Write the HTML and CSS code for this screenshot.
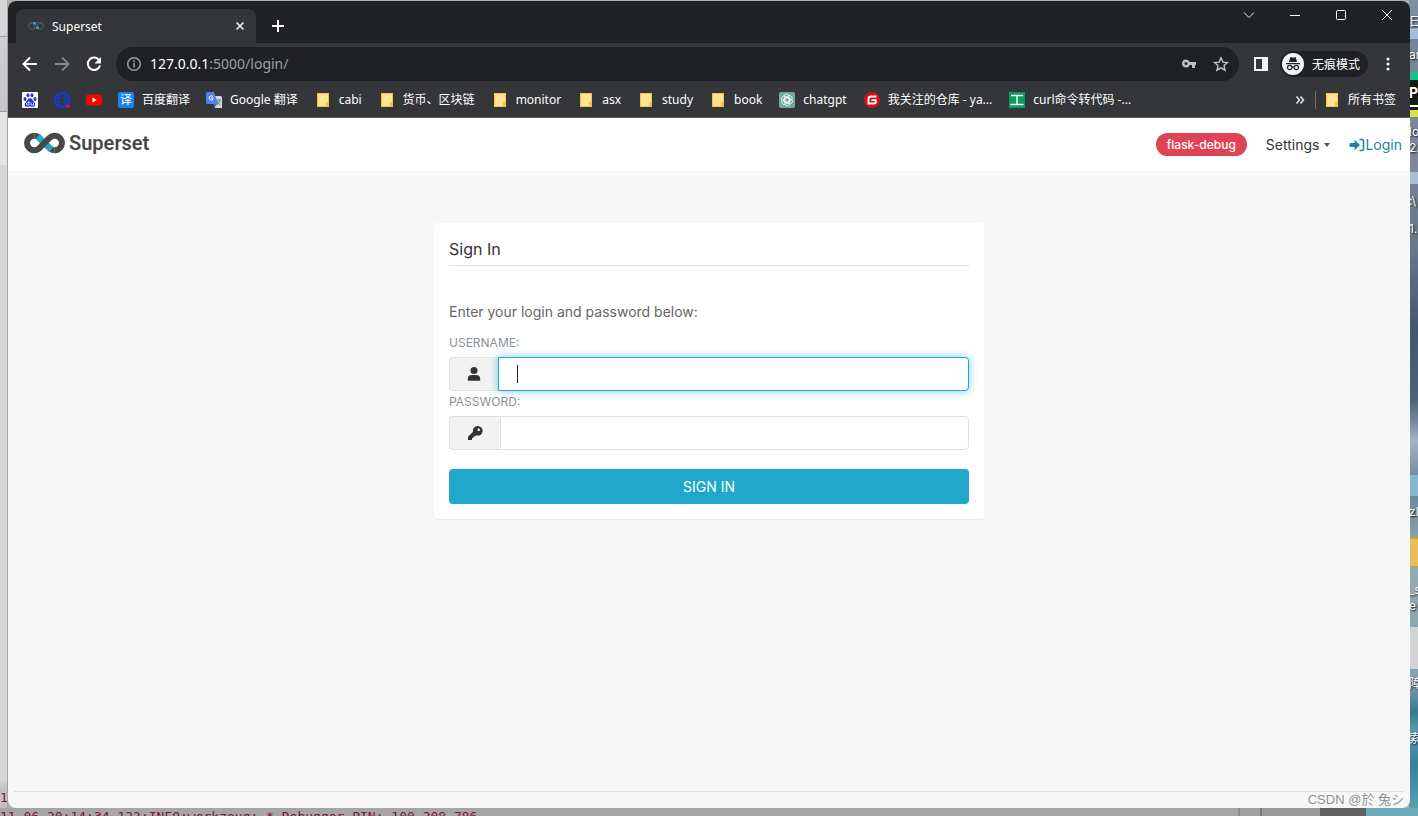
FILE: index.html
```html
<!DOCTYPE html>
<html lang="zh-CN">
<head>
<meta charset="utf-8">
<title>Superset</title>
<link rel="stylesheet" href="styles.css">
</head>
<body>
<div class="backdrop" aria-hidden="true">
  <div class="edge-left"></div>
  <div class="edge-right">
    <span class="snip s1">日</span><span class="snip s2">an</span>
    <span class="art"></span><span class="snip pc">PC</span>
    <span class="snip s3">lo</span><span class="snip s4">2.</span><span class="snip s5">:\</span><span class="snip s6">1.</span>
    <span class="snip s7">zl</span><span class="folder-art"></span><span class="snip s8">_s</span><span class="snip s9">e</span>
    <span class="drive-art"></span><span class="snip s10">障</span><span class="snip s11">索</span>
  </div>
  <div class="edge-bottom"></div>
  <span class="console-top">1.</span>
  <code class="console">11-06 20:14:34,122:INFO:werkzeug: * Debugger PIN: 100-208-786</code>
</div>

<div class="window">
  <header class="tabstrip">
    <div class="tab">
      <svg class="fav" viewBox="0 0 16 16"><g fill="none" stroke-width="1.500"><rect x="1" y="5" width="6" height="6" rx="3" stroke="#505356"/><rect x="9" y="5" width="6" height="6" rx="3" stroke="#505356"/></g><path d="M5 4h3v2.500H5zM8 8.500h3V11H8z" fill="#20a7c9"/></svg>
      <span class="tab-title">Superset</span>
      <button class="plain" aria-label="Close tab"><svg width="16" height="16" viewBox="0 0 16 16"><path d="M4.500 4.500l7 7m0-7l-7 7" stroke="#e8eaed" stroke-width="1.700"/></svg></button>
    </div>
    <button class="plain newtab" aria-label="New tab"><svg width="16" height="16" viewBox="0 0 16 16"><path d="M8 2v12M2 8h12" stroke="#fff" stroke-width="2"/></svg></button>
    <div class="controls">
      <button class="plain" aria-label="Search tabs"><svg width="14" height="14" viewBox="0 0 14 14"><path d="M2 4.500l5 5 5-5" fill="none" stroke="#e8eaed"/></svg></button>
      <button class="plain" aria-label="Minimize"><svg width="14" height="14" viewBox="0 0 14 14"><path d="M2 7.500h10" stroke="#fff"/></svg></button>
      <button class="plain" aria-label="Maximize"><svg width="14" height="14" viewBox="0 0 14 14"><rect x="2.500" y="2.500" width="9" height="9" rx="1" fill="none" stroke="#fff"/></svg></button>
      <button class="plain" aria-label="Close"><svg width="14" height="14" viewBox="0 0 14 14"><path d="M2 2l10 10m0-10L2 12" stroke="#fff"/></svg></button>
    </div>
  </header>

  <div class="toolbar">
    <div class="nav-buttons">
      <button class="plain" aria-label="Back"><svg width="16" height="16" viewBox="0 0 16 16"><path d="M15 8H2M8 1.500L1.500 8 8 14.500" fill="none" stroke="#fff" stroke-width="2"/></svg></button>
      <button class="plain" aria-label="Forward"><svg width="16" height="16" viewBox="0 0 16 16"><path d="M1 8h13M8 1.500L14.500 8 8 14.500" fill="none" stroke="#83868a" stroke-width="2"/></svg></button>
      <button class="plain" aria-label="Reload"><svg width="16" height="16" viewBox="0 0 16 16"><path d="M13.300 4.500A6.200 6.200 0 1 0 14 9.500" fill="none" stroke="#fff" stroke-width="2"/><path d="M15 1v6.500H8.500z" fill="#fff"/></svg></button>
    </div>
    <div class="omnibox">
      <svg width="16" height="16" viewBox="0 0 16 16"><circle cx="8" cy="8" r="6.300" fill="none" stroke="#9aa0a6" stroke-width="1.500"/><path d="M8 7v4.500M8 4.300V6" stroke="#9aa0a6" stroke-width="1.600"/></svg>
      <span class="url"><b>127.0.0.1</b>:5000/login/</span>
      <svg width="16" height="16" viewBox="0 0 16 16"><path d="M5 3.500a4 4 0 1 0 3.700 5.500H11v3h3V9h1V6H8.700A4 4 0 0 0 5 3.500zM5 6a1.500 1.500 0 1 1 0 3 1.500 1.500 0 0 1 0-3z" fill="#bdc1c6" fill-rule="evenodd"/></svg>
      <svg width="16" height="16" viewBox="0 0 16 16"><path d="M8 1.800l1.900 4.300 4.600.4-3.500 3.100 1 4.600L8 11.800l-4 2.400 1-4.600L1.500 6.500l4.600-.4z" fill="none" stroke="#c4c7c5" stroke-width="1.400"/></svg>
    </div>
    <button class="plain side" aria-label="Side panel"><svg width="14" height="14" viewBox="0 0 14 14"><path d="M0 0h14v14H0zM2 2v10h6V2z" fill="#f1f3f4" fill-rule="evenodd"/></svg></button>
    <button class="incognito"><svg width="22" height="22" viewBox="0 0 22 22"><circle cx="11" cy="11" r="11" fill="#f1f3f4"/><path d="M7 9l1.200-4.700h1.500l1.300.5 1.300-.5h1.500L15 9zM4 10h14v1.200H4z" fill="#202124"/><g fill="none" stroke="#202124" stroke-width="1.200"><circle cx="7.700" cy="14.500" r="2.200"/><circle cx="14.300" cy="14.500" r="2.200"/><path d="M10 14.200q1-.8 2 0"/></g></svg>无痕模式</button>
    <button class="plain more" aria-label="Menu"><svg width="16" height="16" viewBox="0 0 16 16"><g fill="#f1f3f4"><circle cx="8" cy="3" r="1.600"/><circle cx="8" cy="8" r="1.600"/><circle cx="8" cy="13" r="1.600"/></g></svg></button>
  </div>

  <nav class="bookmarks" aria-label="书签">
    <a href="#" aria-label="Baidu"><svg width="16" height="16" viewBox="0 0 16 16"><rect width="16" height="16" rx="1" fill="#fff"/><g fill="#2932e1"><ellipse cx="3" cy="7" rx="1.500" ry="2"/><ellipse cx="6" cy="3.300" rx="1.500" ry="2"/><ellipse cx="10" cy="3.300" rx="1.500" ry="2"/><ellipse cx="13" cy="7" rx="1.500" ry="2"/><path d="M8 6.200c2 0 2.500 2 4 3.500s2 5-.8 5c-1.500 0-2-.3-3.200-.3s-1.700.3-3.200.3c-2.800 0-2.300-3.500-.8-5S6 6.200 8 6.200z"/></g><path d="M7 9v4H5.500q-1 0-1-1.200t1-1.200H7M9 10.500v2.500h2.500v-2.500" fill="none" stroke="#fff" stroke-width=".8"/></svg></a>
    <a href="#" aria-label="Chat"><svg width="16" height="16" viewBox="0 0 16 16"><circle cx="8" cy="8" r="7" fill="none" stroke="#1539ee" stroke-width="2"/><path d="M7 5.800H6a2.200 2.200 0 0 0 0 4.400h1M9 5.800h1a2.200 2.200 0 0 1 0 4.400H9" fill="none" stroke="#1539ee" stroke-width="1.500"/><circle cx="14.200" cy="14.200" r="1.800" fill="#e8112d"/></svg></a>
    <a href="#" aria-label="YouTube"><svg width="16" height="16" viewBox="0 0 16 16"><rect y="2.500" width="16" height="11" rx="3" fill="#f00"/><path d="M6.500 5.600L10.700 8l-4.200 2.400z" fill="#fff"/></svg></a>
    <a href="#"><span class="tile blue">译</span>百度翻译</a>
    <a class="mark" href="#"><svg width="16" height="16" viewBox="0 0 16 16"><path d="M6 4h9l1 1v11H9z" fill="#d5d8dc"/><path d="M1 0h7l4 12H1l-1-1V1z" fill="#4a83e8"/><path d="M8 12h3l-2 3z" fill="#3464bf"/><path d="M7 4.500A2.200 2.200 0 1 0 7 7.500V6H5" fill="none" stroke="#fff"/><path d="M10 8h5M12.500 7v1m1.500 0q-1 4-3 5m0-4q1 3 3.500 4" fill="none" stroke="#697782" stroke-width=".9"/></svg>Google 翻译</a>
    <a class="mark" href="#"><i class="folder"></i>cabi</a>
    <a class="mark" href="#"><i class="folder"></i>货币、区块链</a>
    <a class="mark" href="#"><i class="folder"></i>monitor</a>
    <a class="mark" href="#"><i class="folder"></i>asx</a>
    <a class="mark" href="#"><i class="folder"></i>study</a>
    <a class="mark" href="#"><i class="folder"></i>book</a>
    <a class="mark" href="#"><svg width="16" height="16" viewBox="0 0 16 16"><rect width="16" height="16" rx="2" fill="#74aa9c"/><g fill="none" stroke="#fff" stroke-width=".7"><rect x="5.200" y="2.200" width="5" height="8.500" rx="2.500"/><rect x="5.200" y="2.200" width="5" height="8.500" rx="2.500" transform="rotate(60 8 8)"/><rect x="5.200" y="2.200" width="5" height="8.500" rx="2.500" transform="rotate(120 8 8)"/><rect x="5.200" y="2.200" width="5" height="8.500" rx="2.500" transform="rotate(180 8 8)"/><rect x="5.200" y="2.200" width="5" height="8.500" rx="2.500" transform="rotate(240 8 8)"/><rect x="5.200" y="2.200" width="5" height="8.500" rx="2.500" transform="rotate(300 8 8)"/></g></svg>chatgpt</a>
    <a class="mark" href="#"><svg width="16" height="16" viewBox="0 0 16 16"><circle cx="8" cy="8" r="8" fill="#d80d1c"/><path d="M12.500 4.500H7Q4.500 4.500 4.500 7v4.500H10q1.800 0 1.800-1.800V8.200H7.500" fill="none" stroke="#fff" stroke-width="1.800"/></svg>我关注的仓库 - ya...</a>
    <a class="mark" href="#"><svg width="16" height="16" viewBox="0 0 16 16"><path d="M0 0h16v16H0z" fill="#0b9a64"/><path d="M2 3.500h12M8 3.500v9M1.500 12.500h13" stroke="#fff" stroke-width="1.400"/></svg>curl命令转代码 -...</a>
    <button class="plain overflow" aria-label="More bookmarks"><svg width="10" height="10" viewBox="0 0 10 10"><path d="M1.500 1.500L4.500 5l-3 3.500M5.500 1.500L8.500 5l-3 3.500" fill="none" stroke="#e8eaed" stroke-width="1.500"/></svg></button>
    <a class="all" href="#"><i class="folder"></i>所有书签</a>
  </nav>

  <div class="page">
    <nav class="navbar">
      <a class="brand" href="#"><svg width="41" height="22" viewBox="0 0 42 22"><g fill="none" stroke-width="6.200"><path d="M10.500 3.600Q13 3.600 15 5M27 17Q29 18.400 31.500 18.400" stroke="#484848"/><path d="M14 4.200L28 17.800" stroke="#20a7c9" stroke-width="6.500"/><path d="M10.500 3.600a7.400 7.400 0 1 0 0 14.800Q14 18.400 17 15L25 6.800Q28 3.600 31.500 3.600a7.400 7.400 0 1 1 0 14.800" stroke="#484848"/></g></svg><span>Superset</span></a>
      <div class="menu">
        <span class="pill">flask-debug</span>
        <button class="plain settings">Settings<i class="caret"></i></button>
        <a class="login" href="#"><svg width="16" height="14" viewBox="0 0 16 14"><path d="M1.500 5h4V1.800L11 7l-5.500 5.200V9h-4q-1 0-1-1V6q0-1 1-1z" fill="#1985a0"/><path d="M10.500 1.500H13q1.500 0 1.500 1.500v8q0 1.500-1.500 1.500h-2.500" fill="none" stroke="#1985a0" stroke-width="1.600"/></svg>Login</a>
      </div>
    </nav>
    <main>
      <form class="card">
        <h1>Sign In</h1>
        <p>Enter your login and password below:</p>
        <label for="username">Username:</label>
        <div class="field focused">
          <span class="addon"><svg width="14" height="14" viewBox="0 0 14 14"><circle cx="7" cy="3.600" r="3.500" fill="#333"/><path d="M.8 13.800V12q0-4 4-4h4.400q4 0 4 4v1.800z" fill="#333"/></svg></span>
          <input id="username" type="text">
        </div>
        <label for="password">Password:</label>
        <div class="field">
          <span class="addon"><svg width="16" height="16" viewBox="0 0 16 16"><path d="M10.500 1a4.800 4.800 0 1 1-1.300 9.300L8 11.500H6.500V13H5v1.500q0 .5-.5.500h-3q-.5 0-.5-.5v-2.700l5-5A4.800 4.800 0 0 1 10.500 1zm1.300 2.400a1.300 1.300 0 1 0 0 2.600 1.300 1.300 0 0 0 0-2.600z" fill="#333" fill-rule="evenodd"/></svg></span>
          <input id="password" type="password">
        </div>
        <button class="submit" type="submit">Sign In</button>
      </form>
    </main>
    <footer></footer>
  </div>
</div>
<div class="watermark">CSDN @於 兔シ</div>
</body>
</html>
```
FILE: styles.css
```css
* { box-sizing: border-box; }
html, body { height: 100%; }
body {
  margin: 0;
  padding: 1px 8px 8px;
  overflow: hidden;
  position: relative;
  background: #aab1ae;
  font-family: Inter, "Noto Sans CJK SC", sans-serif;
}
a { text-decoration: none; color: inherit; }
svg { display: block; flex: none; }
.plain {
  border: 0; padding: 0; background: none; color: inherit; font: inherit;
  display: flex; align-items: center; justify-content: center;
}

/* Desktop behind the window */
.backdrop { position: absolute; inset: 0; overflow: hidden; }
.edge-left {
  position: absolute; left: 0; top: 0; bottom: 0; width: 8px;
  border-right: 1px solid #a4a4a4;
  background: linear-gradient(#d6d6d6 36px, #999 36px, #999 37px, #cfcfcf 37px, #c6c6c6 111px, #999 111px, #999 112px, #e5e5e5 112px, #e5e5e5 165px, #d6d6d6 165px, #d6d6d6 780px, #c0c0c0 790px);
}
.edge-right {
  position: absolute; right: 0; top: 0; bottom: 0; width: 9px; overflow: hidden;
  background: linear-gradient(#7d8fa2 28px, #a3c0d8 28px, #a3c0d8 39px, #74859a 39px, #7c899a 172px, #a9bfd4 172px, #a9bfd4 184px, #718196 184px, #65788a 250px, #43586a 330px, #4e6577 400px, #708699 420px, #a5b3bd 440px, #748fa6 475px, #86b6d2 475px, #86b6d2 496px, #70899a 496px, #98a9b0 560px, #82a2b2 680px, #3c7a91 712px, #5798aa 730px, #39809b 765px, #62a5b8 816px);
}
.snip {
  position: absolute; left: 0; white-space: nowrap; color: #fff;
  font-size: 12px; line-height: 16px; text-shadow: 1px 1px 2px #000;
}
.s1 { top: 14px; } .s2 { top: 47px; } .s3 { top: 124px; } .s4 { top: 140px; }
.s5 { top: 193px; } .s6 { top: 221px; } .s7 { top: 504px; } .s8 { top: 582px; }
.s9 { top: 598px; } .s10 { top: 676px; } .s11 { top: 731px; }
.art { position: absolute; left: 0; top: 72px; width: 9px; height: 45px; background: linear-gradient(#18c282 8px, #171c12 8px, #171c12 38px, #d9e444 38px); }
.pc { top: 81px; font-weight: 700; font-size: 14px; border-bottom: 2px solid #fff; line-height: 24px; }
.folder-art { position: absolute; left: 0; top: 537px; width: 9px; height: 30px; background: #e6be5b; border: solid #d79b2a; border-width: 2px 0 1px; }
.drive-art { position: absolute; left: 0; top: 627px; width: 9px; height: 42px; background: #d2d3d4; }
.edge-bottom {
  position: absolute; left: 0; right: 0; bottom: 0; height: 8px;
  background: linear-gradient(90deg, #a6a6a6 1238px, #8d8d8d 1238px, #8d8d8d 1240px, #a1a1a1 1240px, #a1a1a1 1260px, #777 1260px, #777 1262px, #999 1262px, #999 1320px, #636363 1320px, #636363 1366px, #6eacbb 1366px);
}
.console, .console-top { position: absolute; left: 0; color: #751b2b; font: 13px/16px "DejaVu Sans Mono", monospace; white-space: nowrap; }
.console { top: 809px; }
.console-top { top: 790px; }

/* Browser window */
.window {
  position: relative; height: 100%; display: flex; flex-direction: column;
  border-radius: 8px; overflow: hidden; background: #f7f7f7;
  color: #fff;
}
.tabstrip, .toolbar, .bookmarks { font-family: "Noto Sans", "Noto Sans CJK SC", sans-serif; font-size: 12px; flex: none; }
.tabstrip { height: 42px; background: #202124; display: flex; align-items: flex-end; padding-left: 8px; }
.tab {
  width: 240px; height: 34px; padding: 0 8px 0 12px; display: flex; align-items: center; gap: 8px;
  background: #35363a; border-radius: 8px 8px 0 0;
}
.fav { width: 16px; height: 16px; }
.tab-title { flex: 1; }
.newtab { width: 28px; height: 34px; margin-left: 8px; }
.controls { margin-left: auto; align-self: flex-start; display: flex; }
.controls .plain { width: 46px; height: 28px; }

.toolbar { height: 42px; background: #35363a; display: flex; align-items: center; }
.nav-buttons { display: flex; gap: 16px; padding: 0 14px; }
.omnibox {
  flex: 1; height: 34px; border-radius: 17px; background: #202124;
  display: flex; align-items: center; padding: 0 10px; gap: 16px;
}
.url { flex: 1; margin-left: -8px; padding-bottom: 1px; font-size: 14px; color: #9aa0a6; }
.url b { font-weight: 400; color: #fff; }
.side { margin: 0 12px 0 15px; }
.incognito {
  height: 26px; border: 0; border-radius: 13px; background: #202124; color: #fff;
  display: flex; align-items: center; gap: 8px; padding: 0 8px 0 2px; font: inherit;
}
.more { margin: 0 14px 0 12px; }

.bookmarks {
  height: 33px; background: #35363a; border-bottom: 1px solid #5c5d61;
  display: flex; align-items: center; gap: 16px; padding: 0 14px 2px; white-space: nowrap;
}
.bookmarks a { display: flex; align-items: center; gap: 8px; line-height: 18px; }
.bookmarks .mark { padding-right: 1px; }
.folder { position: relative; width: 12px; height: 14px; margin: 0 2px; background: #ffe391; border: 1px solid #edc64a; }
.folder::after { content: ""; position: absolute; right: -1px; bottom: -1px; width: 3px; height: 5px; background: #edc64a; }
.tile { width: 16px; height: 16px; border-radius: 2px; line-height: 16px; text-align: center; font-size: 12px; }
.blue { background: #1783f5; }
.overflow { margin-left: auto; margin-right: -6px; }
.bookmarks .all { border-left: 1px solid #6b6c70; padding-left: 8px; }

/* Superset page */
.page { flex: 1; min-height: 0; display: flex; flex-direction: column; color: #333; }
.navbar { height: 53px; flex: none; background: #fff; display: flex; justify-content: space-between; padding: 0 8px 0 16px; }
.brand { display: flex; align-items: center; gap: 4px; padding-bottom: 3px; color: #484848; font: 600 20px/24px Roboto, sans-serif; }
.menu { display: flex; align-items: center; gap: 19px; font-size: 14px; line-height: 20px; }
.pill { background: #e04355; color: #fff; border-radius: 12px; padding: 0 11px; font-size: 12px; line-height: 23px; font-weight: 500; }
.caret { border: 3px solid transparent; border-top: 4px solid #555; border-bottom: 0; margin-left: 5px; }
.login { display: flex; align-items: center; color: #1985a0; }

main { flex: 1; display: flex; justify-content: center; align-items: flex-start; padding: 52px 16px 0; }
.card { width: 550px; max-width: 100%; padding: 15px; background: #fff; border-radius: 4px; box-shadow: 0 1px 1px rgba(0,0,0,.05); }
h1 { margin: 0 0 36px; padding-bottom: 5px; border-bottom: 1px solid #e0e0e0; font-size: 16px; line-height: 22px; font-weight: 400; }
p { margin: 0 0 11px; font-size: 14px; line-height: 20px; color: #666; }
label { display: block; margin-bottom: 4px; font-size: 12px; line-height: 20px; color: #879399; text-transform: uppercase; }
.field { display: flex; height: 34px; margin-bottom: 1px; }
.addon { width: 51px; display: flex; align-items: center; justify-content: center; background: #f2f2f2; border: 1px solid #e0e0e0; border-right: 0; border-radius: 4px 0 0 4px; }
.field input { flex: 1; min-width: 0; border: 1px solid #e0e0e0; border-radius: 0 4px 4px 0; padding: 6px 18px; font: 14px/20px Inter, sans-serif; outline: 0; background-color: #fff; }
.focused .addon { width: 49px; }
.focused input {
  border-color: #20a7c9; box-shadow: 0 0 8px rgba(32,167,201,.6);
  background-image: linear-gradient(#222, #222); background-size: 1px 18px; background-position: 18px 7px; background-repeat: no-repeat;
}
.submit { width: 100%; height: 35px; margin-top: 19px; border: 0; border-radius: 4px; display: block; background: #20a7c9; color: #fff; font: 14px/20px Inter, sans-serif; text-transform: uppercase; }
footer { height: 17px; margin: 0 6px; border-top: 1px solid #e0e0e0; }

.watermark {
  position: absolute; right: 14px; bottom: 6px; color: #8f8f8f; text-shadow: 1px 1px 0 #fff;
  font: 13px/20px "Liberation Sans", "Noto Sans CJK SC", sans-serif;
}
```
